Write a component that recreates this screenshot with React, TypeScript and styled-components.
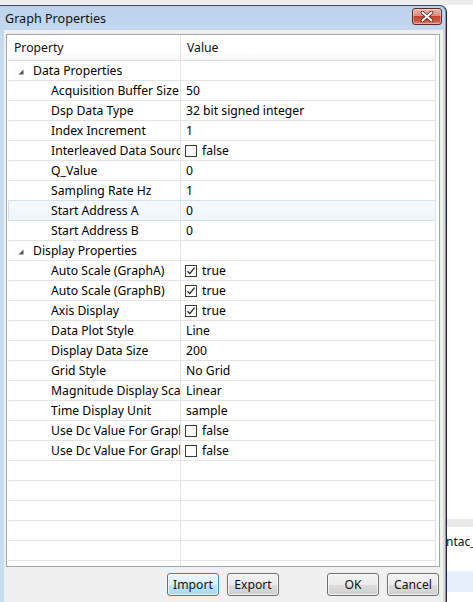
import React from "react";
import styled, { createGlobalStyle } from "styled-components";

const Global = createGlobalStyle`
  html, body { margin: 0; padding: 0; }
  body {
    width: 473px; height: 602px; overflow: hidden; background: #ffffff;
    font-family: "Noto Sans", "Open Sans", sans-serif; font-size: 12.2px; color: #000;
  }
  * { box-sizing: border-box; }
`;

const Page = styled.div`
  display: flex; flex-direction: column; width: 473px; height: 602px; overflow: hidden;
`;
const TopStrip = styled.div`height: 5px; background: #ededed; flex: none;`;
const Main = styled.div`display: flex; flex: 1; min-height: 0;`;

const Window = styled.div`
  width: 447px; flex: none; height: 640px; display: flex; flex-direction: column;
  background: linear-gradient(#bdd3ec, #c7daf0 40px, #c9dcf1);
  border-top: 1px solid #3a4a5c; border-right: 1px solid #1d2733;
  border-top-right-radius: 7px;
  box-shadow: inset -1px 0 0 #5aa9e0;
`;
const TitleBar = styled.div`
  height: 24px; display: flex; align-items: center; justify-content: space-between;
  padding: 0 4px 0 5px;
`;
const Title = styled.span`font-size: 12.6px; color: #101010;`;
const CloseButton = styled.div`
  width: 30px; height: 17px; border: 1px solid #5e2a27; border-radius: 3px;
  background: linear-gradient(#eab3a6, #dc8f7e 45%, #c4432d 50%, #c95a43 80%, #d98a76);
  display: flex; align-items: center; justify-content: center; margin-top: -3px;
  box-shadow: inset 0 0 0 1px rgba(255,255,255,0.35);
`;
const Client = styled.div`
  flex: 1; margin: 0 3px 0 4px; background: #f0f0f0; padding: 4px 3px 0 2px;
  display: flex; flex-direction: column;
`;
const GridBox = styled.div`
  height: 533px; border: 1px solid #a5a5a5; background: #fff; overflow: hidden;
  padding-left: 1px;
`;
const Table = styled.div`width: 428px; display: flex; flex-direction: column;`;

const HeaderRow = styled.div`
  display: grid; grid-template-columns: 173px 1fr; height: 26px;
  border-bottom: 1px solid #e0e0e0;
  background: linear-gradient(#ffffff, #ffffff 70%, #f4f4f4);
`;
const HeaderCell = styled.div`
  display: flex; align-items: center; padding-left: 6px;
  border-right: 1px solid #e4e4e4; color: #111;
`;

const Row = styled.div`
  position: relative;
  display: grid; grid-template-columns: 173px 1fr; height: 20px;
  border-bottom: 1px solid #e4e4e4;
`;
const Selection = styled.div`
  position: absolute; left: 0; right: 0; top: -1px; bottom: -1px;
  border: 1px solid #d3e0ef; border-radius: 2px;
  background: linear-gradient(rgba(240,246,252,0.6), rgba(228,238,249,0.6));
  pointer-events: none;
`;
const NameCell = styled.div<{ $indent: number }>`
  display: flex; align-items: center; padding-left: ${(p) => p.$indent}px;
  border-right: 1px solid #e4e4e4; overflow: hidden; white-space: nowrap;
  position: relative;
`;
const ValueCell = styled.div`
  display: flex; align-items: center; padding-left: 5px;
  border-right: 1px solid #e4e4e4; overflow: hidden; white-space: nowrap;
  position: relative;
`;
const Expander = styled.svg`width: 6px; height: 6px; margin-right: 9px; flex: none; margin-top: 2px;`;
const CheckBox = styled.span`
  width: 12px; height: 12px; border: 1px solid #3d3d30; background: #fff;
  margin-left: -1px; margin-right: 5px; display: inline-flex; align-items: center; justify-content: center;
  flex: none;
`;

const Buttons = styled.div`
  display: flex; justify-content: flex-end; padding: 6px 1px 0 0; gap: 8px;
`;
const Button = styled.button<{ $primary?: boolean; $gapLeft?: number }>`
  width: 52px; height: 23px; margin-left: ${(p) => p.$gapLeft ?? 0}px;
  font-family: inherit; font-size: 12.2px; color: #111; padding: 0;
  border-radius: 3px;
  border: 1px solid ${(p) => (p.$primary ? "#3c7fb1" : "#707070")};
  background: ${(p) =>
    p.$primary
      ? "linear-gradient(#eaf6fd, #d9f0fc 50%, #bee6fd 50%, #a7d9f5)"
      : "linear-gradient(#f2f2f2, #ebebeb 50%, #dddddd 50%, #cfcfcf)"};
  box-shadow: inset 0 0 0 1px rgba(255,255,255,0.7);
`;

const RightPane = styled.div`
  flex: 1; display: flex; flex-direction: column; overflow: hidden; background: #fff;
`;
const Spacer = styled.div<{ $h: number }>`height: ${(p) => p.$h}px; flex: none;`;
const GrayBand = styled.div`height: 8px; background: #e8e8e8; flex: none;`;
const SideText = styled.div`
  height: 18px; display: flex; align-items: center; white-space: nowrap;
  margin-left: -1px; font-size: 12px; color: #111; flex: none;
`;
const BlueBand = styled.div`height: 21px; background: #e5f0fb; flex: none;`;

type Item =
  | { kind: "group"; name: string }
  | { kind: "text"; name: string; value: string; selected?: boolean }
  | { kind: "bool"; name: string; value: boolean };

const items: Item[] = [
  { kind: "group", name: "Data Properties" },
  { kind: "text", name: "Acquisition Buffer Size", value: "50" },
  { kind: "text", name: "Dsp Data Type", value: "32 bit signed integer" },
  { kind: "text", name: "Index Increment", value: "1" },
  { kind: "bool", name: "Interleaved Data Source", value: false },
  { kind: "text", name: "Q_Value", value: "0" },
  { kind: "text", name: "Sampling Rate Hz", value: "1" },
  { kind: "text", name: "Start Address A", value: "0", selected: true },
  { kind: "text", name: "Start Address B", value: "0" },
  { kind: "group", name: "Display Properties" },
  { kind: "bool", name: "Auto Scale (GraphA)", value: true },
  { kind: "bool", name: "Auto Scale (GraphB)", value: true },
  { kind: "bool", name: "Axis Display", value: true },
  { kind: "text", name: "Data Plot Style", value: "Line" },
  { kind: "text", name: "Display Data Size", value: "200" },
  { kind: "text", name: "Grid Style", value: "No Grid" },
  { kind: "text", name: "Magnitude Display Scale", value: "Linear" },
  { kind: "text", name: "Time Display Unit", value: "sample" },
  { kind: "bool", name: "Use Dc Value For GraphA", value: false },
  { kind: "bool", name: "Use Dc Value For GraphB", value: false },
];

const Check = ({ on }: { on: boolean }) => (
  <CheckBox>
    {on && (
      <svg width="10" height="10" viewBox="0 0 10 10">
        <path d="M1.5 5.2 L3.8 7.6 L8.6 1.6" fill="none" stroke="#1e1e1e" strokeWidth="1.3" />
      </svg>
    )}
  </CheckBox>
);

const CloseGlyph = () => (
  <svg width="16" height="11" viewBox="0 0 16 11">
    <path d="M3.5 1.5 L12.5 9.5 M12.5 1.5 L3.5 9.5" stroke="#4a2020" strokeWidth="3.6" strokeLinecap="round" />
    <path d="M3.5 1.5 L12.5 9.5 M12.5 1.5 L3.5 9.5" stroke="#ffffff" strokeWidth="2" strokeLinecap="round" />
  </svg>
);

export default function App() {
  return (
    <>
      <Global />
      <Page>
        <TopStrip />
        <Main>
          <Window>
            <TitleBar>
              <Title>Graph Properties</Title>
              <CloseButton>
                <CloseGlyph />
              </CloseButton>
            </TitleBar>
            <Client>
              <GridBox>
                <Table>
                  <HeaderRow>
                    <HeaderCell>Property</HeaderCell>
                    <HeaderCell>Value</HeaderCell>
                  </HeaderRow>
                  {items.map((it, i) => (
                    <Row key={i}>
                      {it.kind === "text" && it.selected && <Selection />}
                      {it.kind === "group" ? (
                        <>
                          <NameCell $indent={10}>
                            <Expander viewBox="0 0 6 6">
                              <polygon points="5.5,0.5 5.5,5.5 0.5,5.5" fill="#555" />
                            </Expander>
                            {it.name}
                          </NameCell>
                          <ValueCell />
                        </>
                      ) : (
                        <>
                          <NameCell $indent={43}>{it.name}</NameCell>
                          <ValueCell>
                            {it.kind === "bool" ? (
                              <>
                                <Check on={it.value} />
                                {it.value ? "true" : "false"}
                              </>
                            ) : (
                              it.value
                            )}
                          </ValueCell>
                        </>
                      )}
                    </Row>
                  ))}
                  {Array.from({ length: 6 }).map((_, i) => (
                    <Row key={"e" + i}>
                      <NameCell $indent={0} />
                      <ValueCell />
                    </Row>
                  ))}
                </Table>
              </GridBox>
              <Buttons>
                <Button $primary>Import</Button>
                <Button>Export</Button>
                <Button $gapLeft={40}>OK</Button>
                <Button>Cancel</Button>
              </Buttons>
            </Client>
          </Window>
          <RightPane>
            <Spacer $h={514} />
            <GrayBand />
            <Spacer $h={5} />
            <SideText>ntac_</SideText>
            <Spacer $h={21} />
            <BlueBand />
          </RightPane>
        </Main>
      </Page>
    </>
  );
}
